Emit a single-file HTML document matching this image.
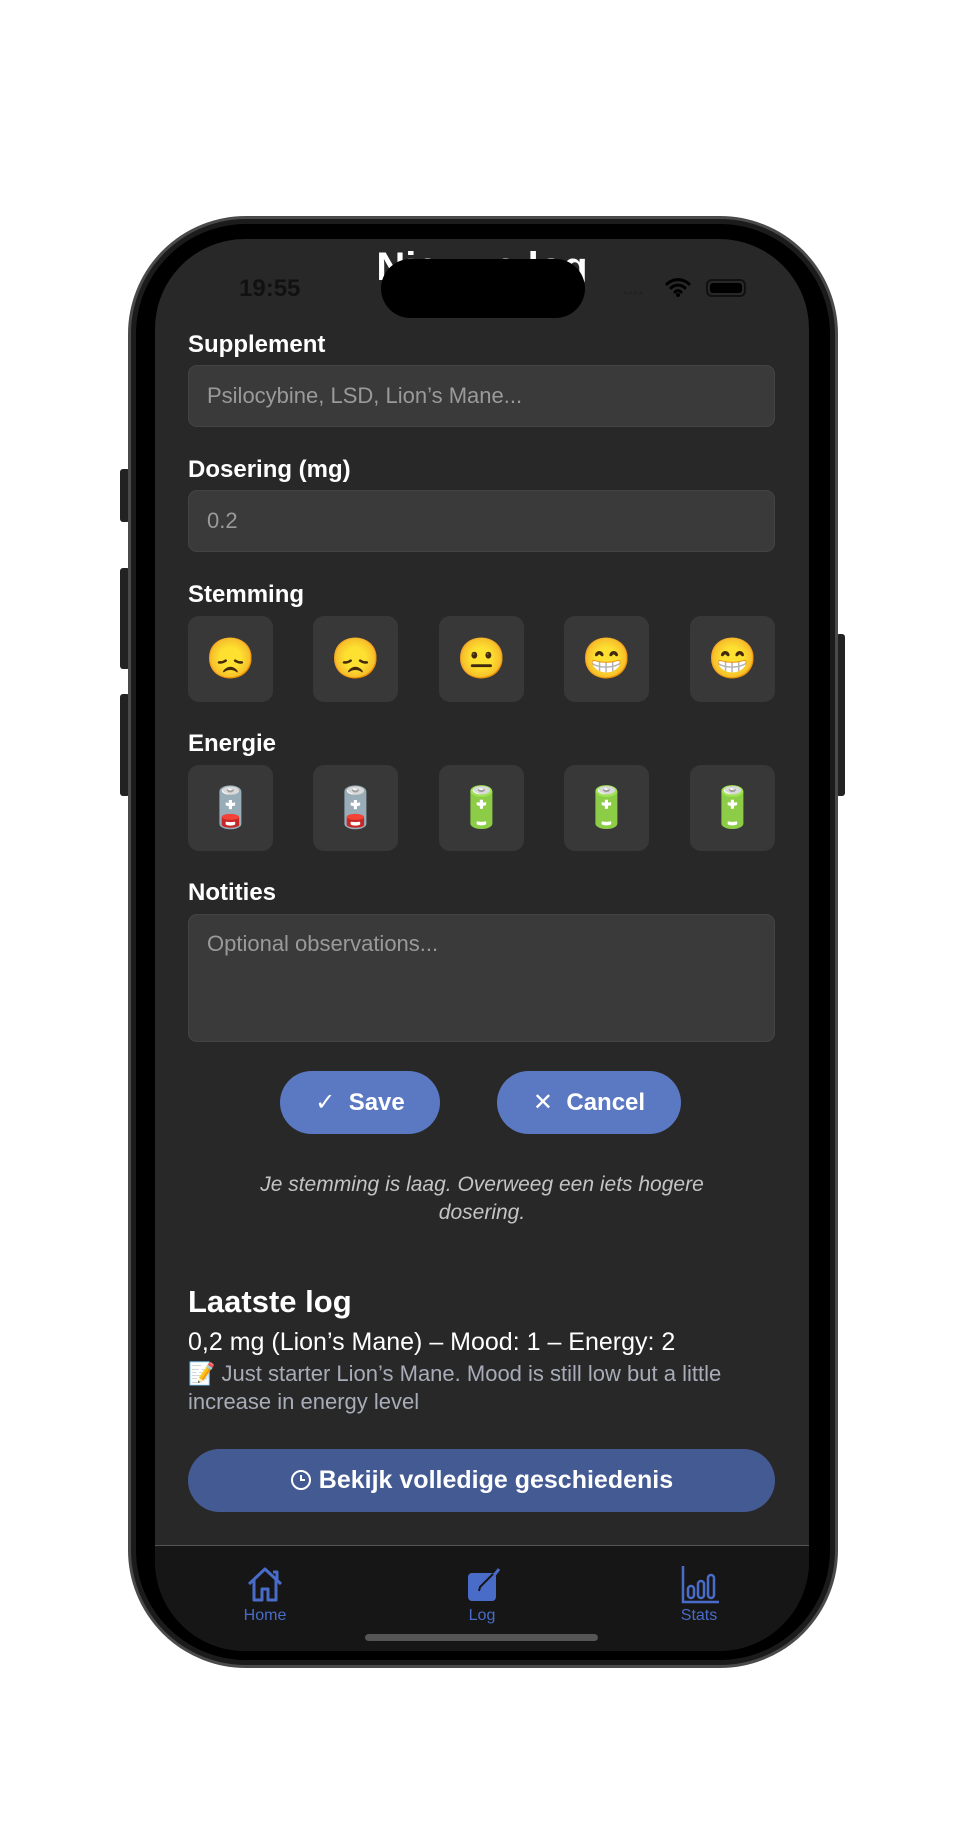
<!DOCTYPE html>
<html><head><meta charset="utf-8">
<style>
*{margin:0;padding:0;box-sizing:border-box}
html,body{width:966px;height:1838px;background:#fff;overflow:hidden;font-family:"Liberation Sans","DejaVu Sans",sans-serif}
.abs{position:absolute}
.phone{left:128px;top:216px;width:710px;height:1452px;border-radius:118px;background:#1b1b1b;border:3px solid #4a4a4a}
.bez{left:136px;top:224px;width:694px;height:1436px;border-radius:110px;background:#000}
.screen{left:155px;top:239px;width:654px;height:1412px;border-radius:90px;background:#282828;overflow:hidden}
.lbl{position:absolute;left:33px;color:#fff;font-weight:bold;font-size:24px}
.inp{position:absolute;left:33px;width:587px;height:62px;background:#3a3a3a;border:1px solid #444;border-radius:9px;color:#9a9a9a;font-size:22px;padding-left:18px;line-height:60px}
.box{position:absolute;width:85px;height:86px;background:#383838;border-radius:11px;font-size:40px;text-align:center;line-height:86px;font-family:"Noto Color Emoji","DejaVu Sans",sans-serif}
.btn{position:absolute;height:63px;border-radius:32px;background:#5b78c2;color:#fff;font-weight:bold;font-size:24px;text-align:center;line-height:63px}
.tab{position:absolute;top:0;width:120px;text-align:center;color:#4a6cc9;font-size:16px}
</style></head><body>
<div class="abs" style="left:120px;top:469px;width:10px;height:53px;background:#222;border-radius:3px"></div>
<div class="abs" style="left:120px;top:568px;width:10px;height:101px;background:#222;border-radius:3px"></div>
<div class="abs" style="left:120px;top:694px;width:10px;height:102px;background:#222;border-radius:3px"></div>
<div class="abs" style="left:836px;top:634px;width:9px;height:162px;background:#222;border-radius:3px"></div>
<div class="abs phone"></div>
<div class="abs bez"></div>
<div class="abs screen">
  <div class="abs" style="left:0;width:654px;top:6px;text-align:center;color:#fff;font-weight:bold;font-size:40px">Nieuwe log</div>
  <div class="abs" style="left:84px;top:36px;color:#111;font-size:24px;font-weight:bold">19:55</div>
  <div class="abs" style="left:226px;top:20px;width:204px;height:59px;border-radius:30px;background:#000"></div>
  <div class="abs" style="left:468px;top:47px;color:#222;font-size:12px;letter-spacing:1px">••••</div>
  <svg class="abs" style="left:510px;top:38px" width="26" height="20" viewBox="0 0 26 20"><path d="M2 7a16 16 0 0 1 22 0M6 11a10 10 0 0 1 14 0M10 15a4 4 0 0 1 6 0" stroke="#000" stroke-width="3" fill="none" stroke-linecap="round"/><circle cx="13" cy="18" r="2" fill="#000"/></svg>
  <div class="abs" style="left:551px;top:40px;width:40px;height:18px;border:2px solid #111;border-radius:6px;padding:2px"><div style="width:100%;height:100%;background:#000;border-radius:3px"></div></div>

  <div class="lbl" style="top:92px">Supplement</div>
  <div class="inp" style="top:126px">Psilocybine, LSD, Lion’s Mane...</div>
  <div class="lbl" style="top:217px">Dosering (mg)</div>
  <div class="inp" style="top:251px">0.2</div>
  <div class="lbl" style="top:342px">Stemming</div>
  <div class="box" style="left:33px;top:377px">😞</div>
  <div class="box" style="left:158px;top:377px">😞</div>
  <div class="box" style="left:284px;top:377px">😐</div>
  <div class="box" style="left:409px;top:377px">😁</div>
  <div class="box" style="left:535px;top:377px">😁</div>
  <div class="lbl" style="top:491px">Energie</div>
  <div class="box" style="left:33px;top:526px">🪫</div>
  <div class="box" style="left:158px;top:526px">🪫</div>
  <div class="box" style="left:284px;top:526px">🔋</div>
  <div class="box" style="left:409px;top:526px">🔋</div>
  <div class="box" style="left:535px;top:526px">🔋</div>
  <div class="lbl" style="top:640px">Notities</div>
  <div class="inp" style="top:675px;height:128px;line-height:normal;padding-top:16px">Optional observations...</div>

  <div class="btn" style="left:125px;top:832px;width:160px">✓&nbsp; Save</div>
  <div class="btn" style="left:342px;top:832px;width:184px">✕&nbsp; Cancel</div>
  <div class="abs" style="left:0;width:654px;top:932px;text-align:center;color:#c4c4c4;font-style:italic;font-size:21px;line-height:28px">Je stemming is laag. Overweeg een iets hogere<br>dosering.</div>

  <div class="abs" style="left:33px;top:1045px;color:#fff;font-weight:bold;font-size:31px">Laatste log</div>
  <div class="abs" style="left:33px;top:1089px;color:#fff;font-size:25px">0,2 mg (Lion’s Mane) – Mood: 1 – Energy: 2</div>
  <div class="abs" style="left:33px;top:1121px;width:585px;color:#a7acb8;font-size:22px;line-height:28px">📝 Just starter Lion’s Mane. Mood is still low but a little increase in energy level</div>
  <div class="btn" style="left:33px;top:1210px;width:587px;background:#445a93;font-size:25px">
    <svg style="vertical-align:-3px" width="22" height="22" viewBox="0 0 22 22"><circle cx="11" cy="11" r="9" stroke="#fff" stroke-width="2" fill="none"/><path d="M11 6v5h4" stroke="#fff" stroke-width="2" fill="none"/></svg>&nbsp;Bekijk volledige geschiedenis</div>

  <div class="abs" style="left:0;top:1306px;width:654px;height:106px;background:#161616;border-top:1px solid #555">
    <div class="tab" style="left:50px">
      <svg style="margin-top:18px" width="40" height="40" viewBox="0 0 40 40"><path d="M4 20L20 5l16 15M9 16v20h8V25h6v11h8V16M28 8h4v8" stroke="#4a6cc9" stroke-width="3" fill="none" stroke-linejoin="round"/></svg>
      <div style="margin-top:-2px">Home</div></div>
    <div class="tab" style="left:267px">
      <svg style="margin-top:18px" width="40" height="40" viewBox="0 0 40 40"><rect x="6" y="9" width="28" height="28" rx="4" fill="#4a6cc9"/><path d="M16 28l4-1L37 5" stroke="#4a6cc9" stroke-width="3" fill="none"/><path d="M17 27l1-4L31 10" stroke="#161616" stroke-width="2" fill="none"/></svg>
      <div style="margin-top:-2px">Log</div></div>
    <div class="tab" style="left:484px">
      <svg style="margin-top:18px" width="40" height="40" viewBox="0 0 40 40"><path d="M4 2v36h36" stroke="#4a6cc9" stroke-width="2.5" fill="none"/><rect x="9" y="22" width="6" height="12" rx="3" stroke="#4a6cc9" stroke-width="2.5" fill="none"/><rect x="19" y="17" width="6" height="17" rx="3" stroke="#4a6cc9" stroke-width="2.5" fill="none"/><rect x="29" y="11" width="6" height="23" rx="3" stroke="#4a6cc9" stroke-width="2.5" fill="none"/></svg>
      <div style="margin-top:-2px">Stats</div></div>
    <div class="abs" style="left:210px;top:88px;width:233px;height:7px;border-radius:4px;background:#555"></div>
  </div>
</div>
</body></html>
